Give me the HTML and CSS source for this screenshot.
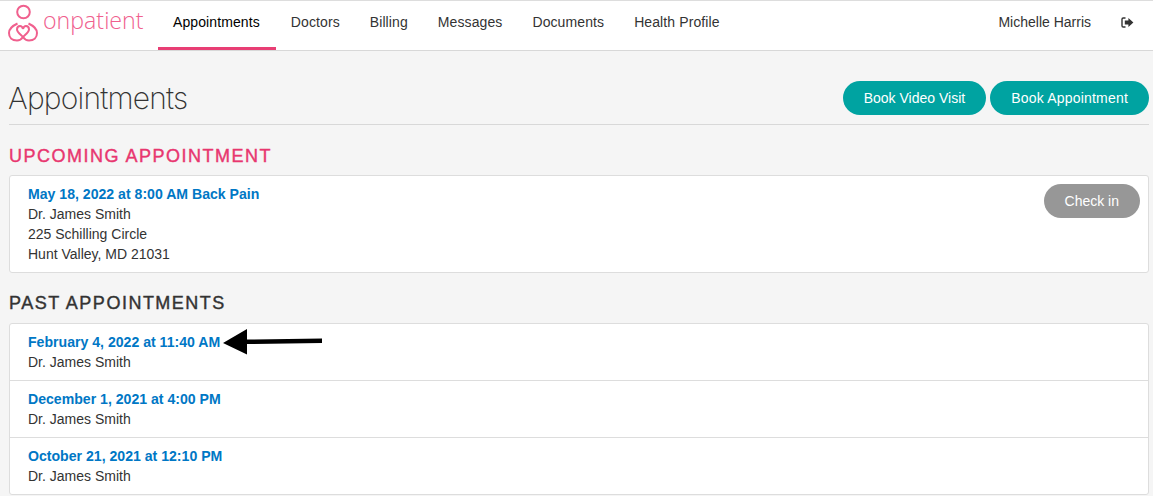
FILE: index.html
```html
<!DOCTYPE html>
<html lang="en">
<head>
    <meta charset="UTF-8">
    <title>Appointments</title>
    <link rel="stylesheet" href="styles.css">
</head>
<body>
    <header class="topbar">
        <a class="logo" href="#">
            <svg class="logo-icon" width="30" height="42" viewBox="0 0 30 42" fill="none" stroke="#f0608e" stroke-width="2">
                <circle cx="15.5" cy="11" r="6.3"/>
                <path d="M9.5 22.5C4 25 1 29 1 32C1 36.5 4 39.5 9 39.5C12.5 39.5 14 37.5 15 36C18 33 21 31 21 28.5C21 26 19.5 25 18 25C16.5 25 15.5 26 15 28"/>
                <path d="M20.5 22.5C26 25 29 29 29 32C29 36.5 26 39.5 21 39.5C17.5 39.5 16 37.5 15 36C12 33 9 31 9 28.5C9 26 10.5 25 12 25C13.5 25 14.5 26 15 28"/>
            </svg>
            <span class="logo-text">onpatient</span>
        </a>
        <nav class="nav">
            <a class="nav-item active" href="#">Appointments</a>
            <a class="nav-item" href="#">Doctors</a>
            <a class="nav-item" href="#">Billing</a>
            <a class="nav-item" href="#">Messages</a>
            <a class="nav-item" href="#">Documents</a>
            <a class="nav-item" href="#">Health Profile</a>
        </nav>
        <div class="user">
            <span class="user-name">Michelle Harris</span>
            <svg class="signout" width="13" height="11" viewBox="0 0 13 11">
                <path d="M4.5 1H2.2C1.4 1 1 1.5 1 2.2V8.8C1 9.5 1.4 10 2.2 10H4.5" fill="none" stroke="#333" stroke-width="1.4"/>
                <path d="M3.8 3.6H7.4V1L12.4 5.5L7.4 10V7.4H3.8Z" fill="#333"/>
            </svg>
        </div>
    </header>

    <main class="content">
        <div class="page-head">
            <h1>Appointments</h1>
            <div class="actions">
                <a class="btn" href="#">Book Video Visit</a>
                <a class="btn btn-wide" href="#">Book Appointment</a>
            </div>
        </div>

        <h2 class="upcoming">Upcoming Appointment</h2>
        <div class="card">
            <div class="row row-upcoming">
                <div>
                    <a class="date" href="#">May 18, 2022 at 8:00 AM Back Pain</a>
                    <div>Dr. James Smith</div>
                    <div>225 Schilling Circle</div>
                    <div>Hunt Valley, MD 21031</div>
                </div>
                <a class="btn btn-grey" href="#">Check in</a>
            </div>
        </div>

        <h2>Past Appointments</h2>
        <div class="card">
            <div class="row">
                <div>
                    <a class="date" href="#">February 4, 2022 at 11:40 AM</a>
                    <div>Dr. James Smith</div>
                </div>
            </div>
            <div class="row">
                <div>
                    <a class="date" href="#">December 1, 2021 at 4:00 PM</a>
                    <div>Dr. James Smith</div>
                </div>
            </div>
            <div class="row">
                <div>
                    <a class="date" href="#">October 21, 2021 at 12:10 PM</a>
                    <div>Dr. James Smith</div>
                </div>
            </div>
        </div>
    </main>

    <!-- arrow drawn over the screenshot -->
    <svg class="arrow" width="100" height="26" viewBox="0 0 100 26">
        <path d="M0 14L24 0V10.5L99 9.5V14L24 15V25.5Z" fill="#000"/>
    </svg>
</body>
</html>
```

FILE: styles.css
```css
body {
    font-family: "Liberation Sans", Arial, sans-serif;
    font-size: 14px;
    line-height: 20px;
    color: #333;
    background-color: #f5f5f5;
    margin: 0;
}

a {
    text-decoration: none;
}

.topbar {
    display: flex;
    height: 49px;
    background-color: #fff;
    border-top: 1px solid #ddd;
    border-bottom: 1px solid #d8d8d8;
}

.logo {
    display: flex;
    align-items: flex-start;
    width: 158px;
    box-sizing: border-box;
    padding-left: 8px;
}

.logo-icon {
    flex: none;
}

.logo-text {
    font-family: "Open Sans", sans-serif;
    font-weight: 300;
    font-size: 23.2px;
    line-height: 38px;
    color: #f0608e;
    margin-left: 5px;
}

.nav {
    display: flex;
}

.nav-item {
    color: #333;
    letter-spacing: .1px;
    padding: 11px 15px 0;
    box-sizing: border-box;
    height: 49px;
}

.nav-item.active {
    color: #000;
    padding-right: 16px;
    border-bottom: 3px solid #e83e74;
}

.user {
    display: flex;
    margin-left: auto;
    padding: 11px 19px 0 0;
}

.signout {
    margin: 5px 0 0 30px;
}

.content {
    padding: 0 4px 0 9px;
}

.page-head {
    display: flex;
    justify-content: space-between;
    height: 74px;
    padding-top: 30px;
    box-sizing: border-box;
    border-bottom: 1px solid #d8d8d8;
}

h1 {
    font-family: Inter, sans-serif;
    font-weight: 200;
    font-size: 30px;
    letter-spacing: -.8px;
    line-height: 34px;
    color: #333;
    margin: 0 0 0 -1px;
}

.actions {
    display: flex;
    gap: 4px;
}

.btn {
    display: block;
    height: 34px;
    line-height: 34px;
    padding: 0 21px;
    border-radius: 17px;
    background-color: #00a3a1;
    color: #fff;
}

.btn-wide {
    letter-spacing: .2px;
}

.btn-grey {
    background-color: #979797;
}

h2 {
    font-size: 18px;
    line-height: 20px;
    font-weight: normal;
    letter-spacing: 1.5px;
    text-transform: uppercase;
    color: #333;
    -webkit-text-stroke: .4px;
    margin: 20px 0 10px;
}

h2.upcoming {
    color: #e8366f;
    margin: 21px 0 9px;
}

.card {
    background-color: #fff;
    border: 1px solid #ddd;
    border-radius: 3px;
}

.row {
    display: flex;
    justify-content: space-between;
    padding: 8px 18px;
    border-top: 1px solid #ddd;
}

.row:first-child {
    border-top: none;
}

.row-upcoming {
    padding-right: 8px;
}

.date {
    display: block;
    font-size: 14.1px;
    font-weight: bold;
    color: #0077c5;
}

.arrow {
    position: absolute;
    left: 223px;
    top: 329px;
}
```
